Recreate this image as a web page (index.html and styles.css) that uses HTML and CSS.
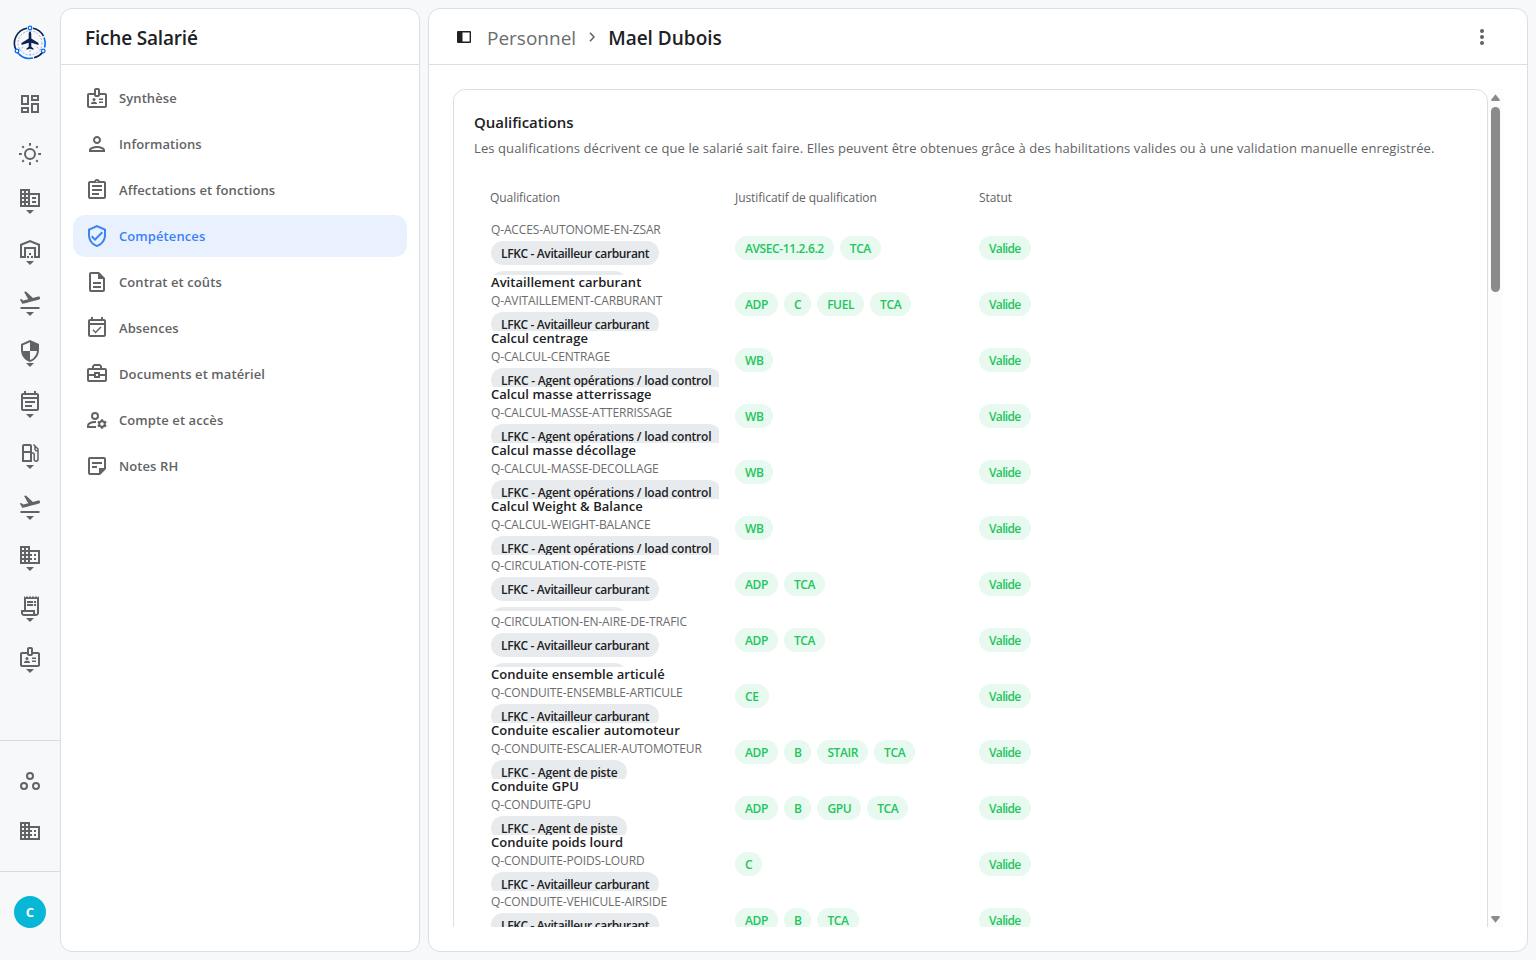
FILE: index.html
```html
<!DOCTYPE html>
<html lang="fr">
<head>
<meta charset="utf-8">
<title>Fiche Salarié</title>
<link rel="stylesheet" href="styles.css">
</head>
<body>
<svg class="defs" aria-hidden="true">
  <symbol id="takeoff" viewBox="0 0 24 24"><path d="M2.5 19h19v2h-19v-2zm19.57-9.36c-.21-.8-1.04-1.28-1.84-1.06L14.92 10l-6.9-6.43-1.93.51 4.14 7.17-4.97 1.33-1.97-1.54-1.45.39 2.59 4.49s7.12-1.9 16.57-4.43c.81-.23 1.28-1.05 1.07-1.85z"/></symbol>
  <symbol id="badge" viewBox="0 0 24 24"><path fill-rule="evenodd" d="M20 7h-5V4c0-1.100-.9-2-2-2h-2c-1.100 0-2 .9-2 2v3H4c-1.100 0-2 .9-2 2v11c0 1.100.9 2 2 2h16c1.100 0 2-.9 2-2V9c0-1.100-.9-2-2-2zM11 4h2v5h-2V4zM20 20H4V9h5c0 1.100.9 2 2 2h2c1.100 0 2-.9 2-2h5v11z"/><circle cx="9" cy="13.500" r="1.500"/><path d="M6 18v-.6c0-1 1.500-1.700 3-1.700s3 .7 3 1.700v.6H6zM14 12.500h4V14h-4zM14 15.500h4V17h-4z"/></symbol>
  <symbol id="domain" viewBox="0 0 24 24"><path fill-rule="evenodd" d="M2 3h10v4h10v14H2zM4 5v2h2V5zm4 0v2h2V5zM4 9v2h2V9zm4 0v2h2V9zm-4 4v2h2v-2zm4 0v2h2v-2zm-4 4v2h2v-2zm4 0v2h2v-2zM12 9v2h2v2h-2v2h2v2h-2v2h8V9z"/><path d="M16 11h2v2h-2zm0 4h2v2h-2z"/></symbol>
</svg>
<div class="app">
  <nav class="rail">
    <div class="rail-logo">
      <svg width="34" height="36" viewBox="0 0 34 36" fill="none">
        <g stroke-width="1.600"><path d="M3 25A15.300 15.300 0 0 1 14 3.200M20 3.200A15.300 15.300 0 0 1 30.500 11" stroke="#0b2454"/><path d="M31 12.500A15.300 15.300 0 0 1 31.500 22.500M4.600 27.500A15.300 15.300 0 0 0 20 33" stroke="#0b6cf0"/><path d="M21 32.700A15.300 15.300 0 0 0 29.500 27.500" stroke="#0b2454"/></g>
        <g stroke="#88a9dc" stroke-width=".9" stroke-dasharray="2 1.500"><circle cx="17" cy="18" r="12"/><path d="M17 25v8M5.500 25l6-3.500M28.500 25l-6-3.500"/></g>
        <g stroke="#0b6cf0" stroke-width="1.300" fill="#f7f8fb"><circle cx="17" cy="3" r="1.800"/><circle cx="4" cy="26" r="1.800"/><circle cx="30.200" cy="26" r="1.800"/></g>
        <path fill="#0b2454" d="M17 6.500c-.9 0-1.300 1.500-1.300 3v4L8.500 18v1.900l7.200-2.200v4.100l-2.200 1.700v1.200l3.500-.9 3.500.9v-1.200l-2.200-1.700v-4.100l7.200 2.200V18l-7.200-4.500v-4c0-1.500-.4-3-1.300-3z"/>
      </svg>
    </div>
    <div class="rail-main">
      <a class="rail-item first"><svg class="ico" viewBox="0 0 24 24"><path d="M19 5v2h-4V5h4M9 5v6H5V5h4m10 8v6h-4v-6h4M9 17v2H5v-2h4M21 3h-8v6h8V3zM11 3H3v10h8V3zm10 8h-8v10h8V11zm-10 4H3v6h8v-6z"/></svg></a>
      <a class="rail-item sun"><svg class="ico line" viewBox="0 0 24 24"><circle cx="12" cy="12" r="5"/><path d="M12 1v2.800M12 20.200V23M1 12h2.800M20.200 12H23M4.300 4.300l1.500 1.500M18.200 18.200l1.500 1.500M4.300 19.700l1.500-1.500M18.200 5.800l1.500-1.500"/></svg></a>
      <a class="rail-item"><svg class="ico" viewBox="0 0 24 24"><path fill-rule="evenodd" d="M2 3h10v4h10v14H2zM4 5v2h2V5zm4 0v2h2V5zM4 9v2h2V9zm4 0v2h2V9zm-4 4v2h2v-2zm4 0v2h2v-2zm-4 4v2h2v-2zm4 0v2h2v-2zM12 9v10h8V9z"/><path d="M14 11h4v2h-4zm0 4h4v2h-4z"/></svg><i class="caret"></i></a>
      <a class="rail-item"><svg class="ico" viewBox="0 0 24 24"><path d="M2 21V7l10-4 10 4v14h-6v-9H8v9zM4 19h2v-9h12v9h2V8.400l-8-3.200-8 3.200zM9 19h2v2H9zm4 0h2v2h-2zm-2-3h2v2h-2z"/></svg><i class="caret"></i></a>
      <a class="rail-item"><svg class="ico"><use href="#takeoff"/></svg><i class="caret"></i></a>
      <a class="rail-item"><svg class="ico" viewBox="0 0 24 24"><path d="M12 1L3 5v6c0 5.550 3.840 10.740 9 12 5.160-1.260 9-6.450 9-12V5l-9-4zm0 10.990h7c-.53 4.120-3.280 7.790-7 8.940V12H5V6.300l7-3.110v8.800z"/></svg><i class="caret"></i></a>
      <a class="rail-item"><svg class="ico" viewBox="0 0 24 24"><path d="M19 3h-1V1h-2v2H8V1H6v2H5c-1.100 0-2 .9-2 2v14c0 1.100.9 2 2 2h14c1.100 0 2-.9 2-2V5c0-1.100-.9-2-2-2zm0 16H5V9h14v10zm0-12H5V5h14v2zM7 11h10v2H7zm0 4h7v2H7z"/></svg><i class="caret"></i></a>
      <a class="rail-item"><svg class="ico line" viewBox="0 0 24 24"><path d="M5 20V5q0-1 1-1h6q1 0 1 1v15H4M5 11h8"/><path stroke-width="1.500" d="M14 12h.8q1.400 0 1.400 1.500v4.800a1.900 1.900 0 0 0 3.800 0V8L15.500 3.500M17 5.500v3q.5 1.500 3 1.500"/></svg><i class="caret"></i></a>
      <a class="rail-item"><svg class="ico"><use href="#takeoff"/></svg><i class="caret"></i></a>
      <a class="rail-item"><svg class="ico"><use href="#domain"/></svg><i class="caret"></i></a>
      <a class="rail-item"><svg class="ico" viewBox="0 0 24 24"><path d="M19.500 3.500 18 2l-1.500 1.500L15 2l-1.500 1.500L12 2l-1.500 1.500L9 2 7.500 3.500 6 2v14H3v3c0 1.660 1.340 3 3 3h12c1.660 0 3-1.340 3-3V2l-1.500 1.500zM15 20H6c-.55 0-1-.45-1-1v-1h10v2zm4-1c0 .55-.45 1-1 1s-1-.45-1-1v-3H8V5h11v14z"/><path d="M9 7h6v2H9zm7 0h2v2h-2zm-7 3h6v2H9zm7 0h2v2h-2z"/></svg><i class="caret"></i></a>
      <a class="rail-item"><svg class="ico"><use href="#badge"/></svg><i class="caret"></i></a>
    </div>
    <div class="rail-tools">
      <svg class="ico line" viewBox="0 0 24 24"><circle cx="12" cy="7" r="3"/><circle cx="6" cy="17" r="3"/><circle cx="18" cy="17" r="3"/></svg>
      <svg class="ico"><use href="#domain"/></svg>
    </div>
    <div class="rail-user"><span class="avatar">C</span></div>
  </nav>

  <aside class="panel side">
    <header class="panel-head"><h1>Fiche Salarié</h1></header>
    <ul class="menu">
      <li><svg class="ico"><use href="#badge"/></svg><span>Synthèse</span></li>
      <li><svg class="ico" viewBox="0 0 24 24"><path d="M12 6c1.100 0 2 .9 2 2s-.9 2-2 2-2-.9-2-2 .9-2 2-2m0 10c2.700 0 5.800 1.290 6 2H6c.23-.72 3.310-2 6-2m0-12C9.790 4 8 5.790 8 8s1.790 4 4 4 4-1.790 4-4-1.790-4-4-4zm0 10c-2.670 0-8 1.340-8 4v2h16v-2c0-2.660-5.330-4-8-4z"/></svg><span>Informations</span></li>
      <li><svg class="ico" viewBox="0 0 24 24"><path d="M7 15h7v2H7zm0-4h10v2H7zm0-4h10v2H7zm12-4h-4.180C14.400 1.840 13.300 1 12 1c-1.300 0-2.400.84-2.820 2H5c-1.100 0-2 .9-2 2v14c0 1.100.9 2 2 2h14c1.100 0 2-.9 2-2V5c0-1.100-.9-2-2-2zm-7-.25c.41 0 .75.34.75.75s-.34.75-.75.75-.75-.34-.75-.75.34-.75.750-.75zM19 19H5V5h14v14z"/></svg><span>Affectations et fonctions</span></li>
      <li class="active"><svg class="ico" viewBox="0 0 24 24"><path d="M12 1L3 5v6c0 5.550 3.840 10.740 9 12 5.160-1.260 9-6.450 9-12V5l-9-4zm7 10c0 4.520-2.980 8.690-7 9.930-4.020-1.240-7-5.410-7-9.930V6.300l7-3.110 7 3.110V11zm-11.590.590L6 13l4 4 8-8-1.410-1.420L10 14.170z"/></svg><span>Compétences</span></li>
      <li><svg class="ico" viewBox="0 0 24 24"><path d="M8 16h8v2H8zm0-4h8v2H8zm6-10H6c-1.100 0-2 .9-2 2v16c0 1.100.89 2 1.990 2H18c1.100 0 2-.9 2-2V8l-6-6zm4 18H6V4h7v5h5v11z"/></svg><span>Contrat et coûts</span></li>
      <li><svg class="ico" viewBox="0 0 24 24"><path d="M19 3h-1V1h-2v2H8V1H6v2H5c-1.100 0-2 .9-2 2v14c0 1.100.9 2 2 2h14c1.100 0 2-.9 2-2V5c0-1.100-.9-2-2-2zm0 16H5V9h14v10zM5 7V5h14v2H5zm5.560 10.500l5.930-5.930-1.060-1.060-4.870 4.870-2.110-2.110-1.060 1.060z"/></svg><span>Absences</span></li>
      <li><svg class="ico" viewBox="0 0 24 24"><path fill-rule="evenodd" d="M20 6h-3V4l-2-2H9L7 4v2H4c-1.100 0-2 .9-2 2v10c0 1.100.9 2 2 2h16c1.100 0 2-.9 2-2V8c0-1.100-.9-2-2-2zM9 4h6v2H9zM4 8h16v4h-5v-2H9v2H4zm7 4h2v2h-2zm9 6H4v-4h5v2h6v-2h5z"/></svg><span>Documents et matériel</span></li>
      <li><svg class="ico line" viewBox="0 0 24 24"><circle cx="10" cy="8" r="3"/><path d="M11 19H3v-1.500c0-2 3.500-3.500 7-3.500h1"/><circle cx="17" cy="16" r="2.800"/><path stroke-width="2.200" d="M17 11.200v2M17 18.800v2M12.850 13.600l1.700 1M19.450 17.400l1.700 1M12.850 18.400l1.700-1M19.450 14.600l1.700-1"/></svg><span>Compte et accès</span></li>
      <li><svg class="ico" viewBox="0 0 24 24"><path d="M19 5v9h-5v5H5V5h14m0-2H5c-1.100 0-2 .9-2 2v14c0 1.100.9 2 2 2h10l6-6V5c0-1.100-.9-2-2-2zm-7 11H7v-2h5v2zm5-4H7V8h10v2z"/></svg><span>Notes RH</span></li>
    </ul>
  </aside>

  <main class="panel content">
    <header class="panel-head crumbs">
      <svg class="toggle" viewBox="0 0 14 12"><path fill-rule="evenodd" d="M1 0h12q1 0 1 1v10q0 1-1 1H1q-1 0-1-1V1q0-1 1-1zM5.500 1.400v9.200h7.100V1.400z"/></svg>
      <span class="crumb">Personnel</span>
      <svg class="chevron" viewBox="0 0 6 10"><path d="M1 .8 5 5 1 9.200"/></svg>
      <span class="crumb current">Mael Dubois</span>
      <svg class="more" viewBox="0 0 4 16"><circle cx="2" cy="2" r="2"/><circle cx="2" cy="8" r="2"/><circle cx="2" cy="14" r="2"/></svg>
    </header>
    <div class="scroller">
      <section class="card">
        <h2>Qualifications</h2>
        <p class="lead">Les qualifications décrivent ce que le salarié sait faire. Elles peuvent être obtenues grâce à des habilitations valides ou à une validation manuelle enregistrée.</p>
        <div class="table">
          <div class="thead"><span>Qualification</span><span>Justificatif de qualification</span><span>Statut</span></div>
          <div class="row"><div class="qual"><div><b>Accès autonome en ZSAR</b><small>Q-ACCES-AUTONOME-EN-ZSAR</small><em class="fuel">LFKC - Avitailleur carburant</em><em>LFKC - Agent de piste</em></div></div><div class="tags"><i>AVSEC-11.2.6.2</i><i>TCA</i></div><div class="tags status"><i>Valide</i></div></div>
          <div class="row"><div class="qual"><div><b>Avitaillement carburant</b><small>Q-AVITAILLEMENT-CARBURANT</small><em class="fuel">LFKC - Avitailleur carburant</em></div></div><div class="tags"><i>ADP</i><i>C</i><i>FUEL</i><i>TCA</i></div><div class="tags status"><i>Valide</i></div></div>
          <div class="row"><div class="qual"><div><b>Calcul centrage</b><small>Q-CALCUL-CENTRAGE</small><em>LFKC - Agent opérations / load control</em></div></div><div class="tags"><i>WB</i></div><div class="tags status"><i>Valide</i></div></div>
          <div class="row"><div class="qual"><div><b>Calcul masse atterrissage</b><small>Q-CALCUL-MASSE-ATTERRISSAGE</small><em>LFKC - Agent opérations / load control</em></div></div><div class="tags"><i>WB</i></div><div class="tags status"><i>Valide</i></div></div>
          <div class="row"><div class="qual"><div><b>Calcul masse décollage</b><small>Q-CALCUL-MASSE-DECOLLAGE</small><em>LFKC - Agent opérations / load control</em></div></div><div class="tags"><i>WB</i></div><div class="tags status"><i>Valide</i></div></div>
          <div class="row"><div class="qual"><div><b>Calcul Weight &amp; Balance</b><small>Q-CALCUL-WEIGHT-BALANCE</small><em>LFKC - Agent opérations / load control</em></div></div><div class="tags"><i>WB</i></div><div class="tags status"><i>Valide</i></div></div>
          <div class="row"><div class="qual"><div><b>Circulation côté piste</b><small>Q-CIRCULATION-COTE-PISTE</small><em class="fuel">LFKC - Avitailleur carburant</em><em>LFKC - Agent de piste</em></div></div><div class="tags"><i>ADP</i><i>TCA</i></div><div class="tags status"><i>Valide</i></div></div>
          <div class="row"><div class="qual"><div><b>Circulation en aire de trafic</b><small>Q-CIRCULATION-EN-AIRE-DE-TRAFIC</small><em class="fuel">LFKC - Avitailleur carburant</em><em>LFKC - Agent de piste</em></div></div><div class="tags"><i>ADP</i><i>TCA</i></div><div class="tags status"><i>Valide</i></div></div>
          <div class="row"><div class="qual"><div><b>Conduite ensemble articulé</b><small>Q-CONDUITE-ENSEMBLE-ARTICULE</small><em class="fuel">LFKC - Avitailleur carburant</em></div></div><div class="tags"><i>CE</i></div><div class="tags status"><i>Valide</i></div></div>
          <div class="row"><div class="qual"><div><b>Conduite escalier automoteur</b><small>Q-CONDUITE-ESCALIER-AUTOMOTEUR</small><em>LFKC - Agent de piste</em></div></div><div class="tags"><i>ADP</i><i>B</i><i>STAIR</i><i>TCA</i></div><div class="tags status"><i>Valide</i></div></div>
          <div class="row"><div class="qual"><div><b>Conduite GPU</b><small>Q-CONDUITE-GPU</small><em>LFKC - Agent de piste</em></div></div><div class="tags"><i>ADP</i><i>B</i><i>GPU</i><i>TCA</i></div><div class="tags status"><i>Valide</i></div></div>
          <div class="row"><div class="qual"><div><b>Conduite poids lourd</b><small>Q-CONDUITE-POIDS-LOURD</small><em class="fuel">LFKC - Avitailleur carburant</em></div></div><div class="tags"><i>C</i></div><div class="tags status"><i>Valide</i></div></div>
          <div class="row"><div class="qual"><div><b>Conduite véhicule airside</b><small>Q-CONDUITE-VEHICULE-AIRSIDE</small><em class="fuel">LFKC - Avitailleur carburant</em><em>LFKC - Agent de piste</em></div></div><div class="tags"><i>ADP</i><i>B</i><i>TCA</i></div><div class="tags status"><i>Valide</i></div></div>
        </div>
      </section>
      <div class="scrollbar">
        <svg width="9" height="7" viewBox="0 0 9 7"><path d="M4.500.3 8.700 5.500Q9 7 8 7H1Q0 7 .3 5.500z"/></svg>
        <div class="thumb"></div>
        <svg class="down" width="9" height="7" viewBox="0 0 9 7"><path d="M4.500 6.700.3 1.500Q0 0 1 0h7q1 0 .7 1.500z"/></svg>
      </div>
    </div>
  </main>
</div>
</body>
</html>
```
FILE: styles.css
```css
* { box-sizing: border-box; }
body { margin: 0; background: #f7f8fa; color: #202123; font-family: "Open Sans", "Noto Sans", sans-serif; font-size: 13px; overflow: hidden; }
h1, h2, p, ul { margin: 0; padding: 0; }
li { list-style: none; }
.defs { display: none; }
.app { display: flex; height: 960px; width: 1536px; padding: 8px 8px 8px 0; }
.ico { width: 24px; height: 24px; fill: #626365; display: block; flex: none; }
.line { fill: none; stroke: #626365; stroke-width: 2; }

.rail { width: 60px; margin: -8px 0; display: flex; flex-direction: column; align-items: center; flex: none; }
.rail-logo { height: 86px; padding-top: 25px; }
.rail-main { flex: 1; display: flex; flex-direction: column; align-items: center; }
.rail-item { height: 51px; padding-top: 6px; display: flex; flex-direction: column; align-items: center; }
.rail-item.first { height: 50px; }
.rail-item.sun { height: 44px; padding-top: 5.500px; }
.caret { width: 0; height: 0; border: 4px solid transparent; border-top-color: #626365; border-bottom: 0; }
.rail-tools { width: 60px; height: 131px; border-top: 1px solid #d9dbdf; padding-top: 28px; display: flex; flex-direction: column; align-items: center; gap: 26px; }
.rail-user { width: 60px; height: 89px; border-top: 1px solid #d9dbdf; padding-top: 24px; display: flex; justify-content: center; }
.avatar { width: 32px; height: 32px; border-radius: 50%; background: #08b6d6; color: #fff; font-size: 13px; font-weight: 700; line-height: 33px; text-align: center; }

.panel { background: #fff; border: 1px solid #dcdee0; border-radius: 12px; overflow: hidden; }
.side { width: 360px; flex: none; }
.content { width: 1100px; margin-left: 8px; display: flex; flex-direction: column; }
.panel-head { height: 56px; border-bottom: 1px solid #dcdee0; padding: 0 24px; display: flex; align-items: center; flex: none; }
.panel-head h1 { font-size: 19px; font-weight: 600; line-height: 28px; letter-spacing: -.18px; padding-top: 2px; }

.menu { padding: 12px; display: flex; flex-direction: column; gap: 4px; }
.menu li { height: 42px; border-radius: 12px; padding: 0 12px; display: flex; align-items: center; gap: 10px; color: #626365; font-size: 13px; font-weight: 600; letter-spacing: .09px; }
.menu .active { background: #eaf1fe; color: #3b82f6; }
.menu .active .ico { fill: #3b82f6; }

.crumbs { padding: 0 43px 0 28px; }
.toggle { width: 14px; height: 12px; fill: #202123; }
.crumb { font-size: 19px; line-height: 28px; padding-top: 2px; color: #6b6c6e; margin-left: 16px; font-weight: 500; }
.crumb.current { color: #202123; font-weight: 600; margin-left: 13px; letter-spacing: 0; }
.chevron { width: 6px; height: 10px; margin-left: 13px; fill: none; stroke: #626365; stroke-width: 1.600; }
.more { width: 4px; height: 16px; margin-left: auto; fill: #626365; }

.scroller { margin: 24px; height: 838px; display: flex; overflow: hidden; flex: none; }
.card { width: 1035px; height: 900px; border: 1px solid #dcdee0; border-radius: 12px; padding: 20px; flex: none; }
.card h2 { font-size: 15px; font-weight: 600; line-height: 24px; letter-spacing: -.05px; }
.lead { font-size: 13px; line-height: 20px; margin-top: 4px; color: #626365; white-space: nowrap; letter-spacing: .092px; }
.table { padding: 0 16px; margin-top: 20px; }
.thead, .row { display: grid; grid-template-columns: 229px 228px 1fr; column-gap: 16px; }
.thead { height: 42px; line-height: 39px; font-size: 12px; font-weight: 500; color: #626365; letter-spacing: -.06px; }
.row { height: 56px; padding-bottom: 1px; }
.qual { height: 55px; overflow: hidden; display: flex; align-items: center; padding: 2px 0 0 1px; }
.qual > div { display: flex; flex-direction: column; align-items: flex-start; flex: none; }
.qual b { font-size: 13px; font-weight: 600; line-height: 18px; letter-spacing: .04px; }
.qual small { font-size: 12px; height: 18px; line-height: 20px; color: #6b6c6e; letter-spacing: -.14px; }
.qual em { height: 24px; line-height: 25px; border-radius: 12px; padding: 0 10px; margin-top: 3px; background: #e8ebee; font-style: normal; font-weight: 600; font-size: 12px; white-space: nowrap; letter-spacing: -.22px; }
.qual em.fuel { letter-spacing: -.36px; }
.qual em + em { margin-top: 6px; }
.tags { display: flex; align-items: flex-start; gap: 6px; padding-top: 16px; }
.tags i { height: 24px; line-height: 25px; border-radius: 12px; padding: 0 10px; background: #e8f9ef; color: #22c55e; font-style: normal; font-weight: 600; font-size: 12px; letter-spacing: -.4px; }
.status i { letter-spacing: -.65px; }

.scrollbar { width: 15px; background: #fcfcfc; padding-top: 5px; display: flex; flex-direction: column; align-items: center; fill: #8b8b8b; }
.scrollbar svg { flex: none; }
.thumb { width: 9px; height: 185px; margin-top: 6px; border-radius: 5px; background: #8b8b8b; }
.down { margin: auto 0 4px; }
```
